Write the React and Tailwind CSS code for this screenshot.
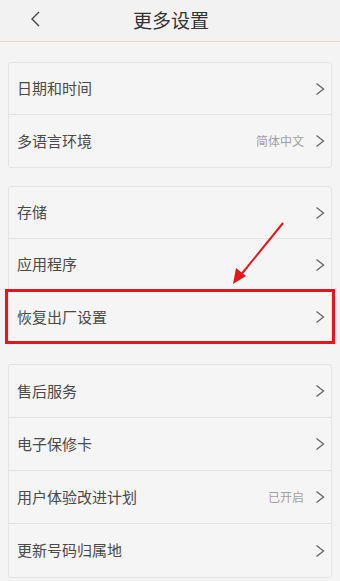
import React from "react";

const Chevron = () => (
  <svg width="10" height="14" viewBox="0 0 10 14" className="shrink-0">
    <polyline points="1.5,1.5 8.5,7 1.5,12.5" fill="none" stroke="#666" strokeWidth="1.3" />
  </svg>
);

const Row = ({ label, value, last, h = "h-[52px]" }) => (
  <div className={`${h} flex items-center pl-[8px] pr-[6px] ${last ? "" : "border-b border-[#e2e2e2]"}`}>
    <span className="flex-1 text-[15px] text-[#4a4a4a]">{label}</span>
    {value && <span className="text-[12px] text-[#a0a0a0] mr-[11px]">{value}</span>}
    <Chevron />
  </div>
);

const Card = ({ children }) => (
  <div className="mx-[8px] rounded-[3px] border border-[#e4e4e4] bg-[#f5f5f5]">{children}</div>
);

export default function App() {
  return (
    <div
      className="relative w-[340px] h-[581px] overflow-hidden bg-[#f4f4f4]"
      style={{ fontFamily: '"Noto Sans CJK SC", "Noto Sans", sans-serif' }}
    >
      <div className="h-[42px] bg-[#f2f2f2] flex items-center relative border-b border-[#efd6c6]">
        <svg width="12" height="18" viewBox="0 0 12 18" className="absolute left-[30px] top-[10px]">
          <polyline points="9,2 2,9 9,16" fill="none" stroke="#444" strokeWidth="1.4" />
        </svg>
        <div className="flex-1 text-center text-[19px] text-[#333] pl-[2px]">更多设置</div>
      </div>
      <div className="pt-[20px] flex flex-col gap-[18px]">
        <Card>
          <Row label="日期和时间" />
          <Row label="多语言环境" value="简体中文" last />
        </Card>
        <Card>
          <Row label="存储" />
          <Row label="应用程序" />
          <Row label="恢复出厂设置" last />
        </Card>
        <div className="pt-[2px]">
          <Card>
            <Row label="售后服务" h="h-[53px]" />
            <Row label="电子保修卡" h="h-[53px]" />
            <Row label="用户体验改进计划" value="已开启" h="h-[53px]" />
            <Row label="更新号码归属地" last h="h-[53px]" />
          </Card>
        </div>
      </div>
      <div className="absolute left-[5px] top-[289px] w-[330px] h-[55px] border-[3px] border-[#e3161b]" />
      <svg width="340" height="581" className="absolute left-0 top-0 pointer-events-none">
        <line x1="283" y1="223" x2="240" y2="276" stroke="#e3161b" strokeWidth="2" />
        <polygon points="233,284 236,268 246,276" fill="#e3161b" />
      </svg>
    </div>
  );
}
